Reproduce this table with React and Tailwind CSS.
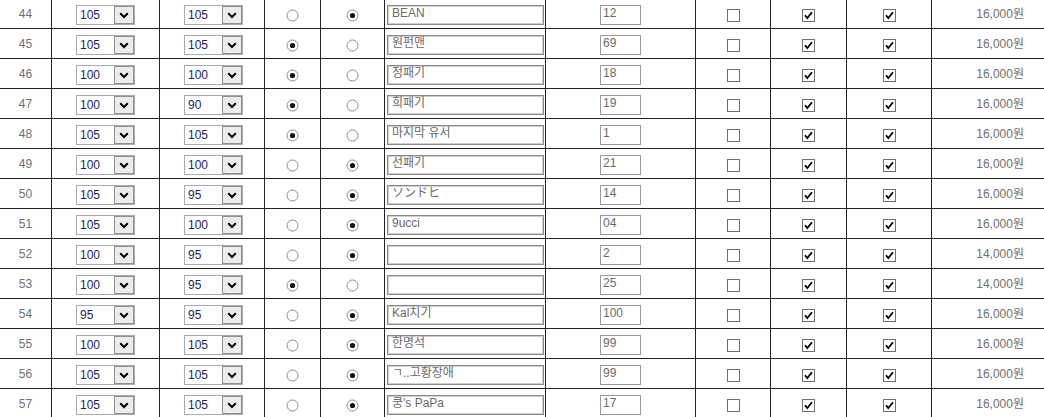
import React from "react";

const rows = [
  [44, "105", "105", 2, "BEAN", "12", "16,000원"],
  [45, "105", "105", 1, "원펀맨", "69", "16,000원"],
  [46, "100", "100", 1, "정패기", "18", "16,000원"],
  [47, "100", "90", 1, "희패기", "19", "16,000원"],
  [48, "105", "105", 1, "마지막 유서", "1", "16,000원"],
  [49, "100", "100", 2, "선패기", "21", "16,000원"],
  [50, "105", "95", 2, "ソンドヒ", "14", "16,000원"],
  [51, "105", "100", 2, "9ucci", "04", "16,000원"],
  [52, "100", "95", 2, "", "2", "14,000원"],
  [53, "100", "95", 1, "", "25", "14,000원"],
  [54, "95", "95", 2, "Kal치기", "100", "16,000원"],
  [55, "100", "105", 2, "한명석", "99", "16,000원"],
  [56, "105", "105", 2, "ㄱ..고황장애", "99", "16,000원"],
  [57, "105", "105", 2, "쿵's PaPa", "17", "16,000원"],
];

function Select({ value }) {
  return (
    <div className="w-[59px] h-[20px] border border-[#a5acb2] bg-white flex">
      <span className="flex-1 pl-[3px] text-[12px] leading-[18px] text-[#1e1e5a] font-['Liberation_Sans',sans-serif]">
        {value}
      </span>
      <span className="w-[20px] h-[18px] border border-[#8e8f8f] bg-[#ececec] flex items-center justify-center">
        <svg width="10" height="7" viewBox="0 0 10 7">
          <path d="M1.2 1.2 L5 5 L8.8 1.2" stroke="#000" strokeWidth="2" fill="none" />
        </svg>
      </span>
    </div>
  );
}

function Radio({ checked }) {
  return (
    <svg width="13" height="13" viewBox="0 0 13 13">
      <circle cx="6.5" cy="6.5" r="5.5" fill="#fff" stroke="#8a8a8a" strokeWidth="1" />
      {checked && <circle cx="6.5" cy="6.5" r="2.6" fill="#111" />}
    </svg>
  );
}

function Check({ checked }) {
  return (
    <svg width="13" height="13" viewBox="0 0 13 13">
      <rect x="0.5" y="0.5" width="12" height="12" fill="#fff" stroke="#707070" />
      {checked && (
        <path d="M3 6.2 L5.3 9 L10 3.2" stroke="#000" strokeWidth="1.8" fill="none" />
      )}
    </svg>
  );
}

export default function App() {
  return (
    <div className="w-[1044px] h-[417px] overflow-hidden bg-white font-['Liberation_Sans','Noto_Sans_CJK_KR',sans-serif]">
      <div className="mt-[-1px]">
        {rows.map(([n, s1, s2, r, name, num, price]) => (
          <div
            key={n}
            className="grid grid-cols-[52px_108px_105px_56px_64px_161px_150px_75px_76px_85px_112px] h-[30px] border-b border-[#222]"
          >
            <div className="border-r border-[#222] flex justify-center pt-[9px] text-[12px] leading-[13px] text-[#707070]">
              {n}
            </div>
            <div className="border-r border-[#222] pl-[24px] pt-[6px]">
              <Select value={s1} />
            </div>
            <div className="border-r border-[#222] pl-[24px] pt-[6px]">
              <Select value={s2} />
            </div>
            <div className="border-r border-[#222] flex justify-center pt-[10px]">
              <Radio checked={r === 1} />
            </div>
            <div className="border-r border-[#222] flex justify-center pt-[10px]">
              <Radio checked={r === 2} />
            </div>
            <div className="border-r border-[#222] pl-[2px] pt-[6px]">
              <div className="w-[157px] h-[20px] border border-[#8a8a8a] shadow-[inset_0_0_0_1px_#cfcfcf] pl-[4px] text-[12px] leading-[15px] text-[#6a6a6a] whitespace-nowrap overflow-hidden">
                {name}
              </div>
            </div>
            <div className="border-r border-[#222] flex justify-center pt-[6px]">
              <div className="w-[41px] h-[20px] border border-[#9a9a9a] pl-[2px] text-[12px] leading-[15px] text-[#6a6a6a]">
                {num}
              </div>
            </div>
            <div className="border-r border-[#222] flex justify-center pt-[10px]">
              <Check checked={false} />
            </div>
            <div className="border-r border-[#222] flex justify-center pt-[10px]">
              <Check checked={true} />
            </div>
            <div className="border-r border-[#222] flex justify-center pt-[10px]">
              <Check checked={true} />
            </div>
            <div className="flex justify-end pr-[20px] pt-[9px] text-[12px] leading-[13px] text-[#707070]">
              {price}
            </div>
          </div>
        ))}
      </div>
    </div>
  );
}
